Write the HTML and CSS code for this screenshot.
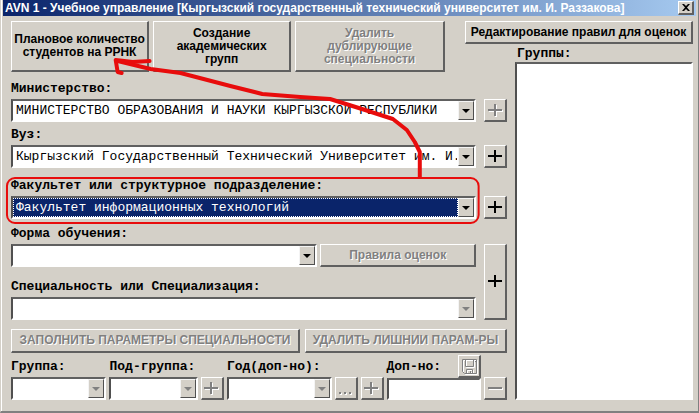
FILE: index.html
```html
<!DOCTYPE html>
<html lang="ru">
<head>
<meta charset="utf-8">
<title>AVN 1 - Учебное управление</title>
<link rel="stylesheet" href="styles.css">
</head>
<body>
<main class="window">
  <header class="titlebar">
    <h1>AVN 1 - Учебное управление [Кыргызский государственный технический университет им. И. Раззакова]</h1>
    <button class="btn close" type="button" aria-label="Закрыть"><svg width="8" height="7" viewBox="0 0 8 7"><path d="M0 0h2l2 2 2-2h2L5 3.500 8 7H6L4 5 2 7H0l3-3.500z"/></svg></button>
  </header>
  <div class="body">
    <div class="tools">
      <button class="btn t1" type="button">Плановое количество<br>студентов на РРНК</button>
      <button class="btn t2" type="button">Создание<br>академических<br>групп</button>
      <button class="btn t3" type="button" disabled>Удалить<br>дублирующие<br>специальности</button>
    </div>
    <button class="btn edit" type="button">Редактирование правил для оценок</button>
    <section class="groups">
      <label for="groups">Группы:</label>
      <select id="groups" size="10" class="sunken"></select>
    </section>
    <form class="form">
      <label for="min">Министерство:</label>
      <div class="combo sunken"><select id="min"><option>МИНИСТЕРСТВО ОБРАЗОВАНИЯ И НАУКИ КЫРГЫЗСКОЙ РЕСПУБЛИКИ</option></select><span class="arrow"></span></div>
      <button class="btn sq" type="button" disabled aria-label="Добавить министерство"><svg class="ico" viewBox="0 0 15 15"><path d="M0 7h14M7 1v12"/></svg></button>

      <label for="vuz">Вуз:</label>
      <div class="combo sunken"><select id="vuz"><option>Кыргызский Государственный Технический Университет им. И. Раззакова</option></select><span class="arrow"></span></div>
      <button class="btn sq" type="button" aria-label="Добавить вуз"><svg class="ico" viewBox="0 0 15 15"><path d="M0 7h14M7 1v12"/></svg></button>

      <label for="fac">Факультет или структурное подразделение:</label>
      <div class="combo sunken"><select id="fac" class="active"><option>Факультет информационных технологий</option></select><span class="arrow"></span></div>
      <button class="btn sq" type="button" aria-label="Добавить факультет"><svg class="ico" viewBox="0 0 15 15"><path d="M0 7h14M7 1v12"/></svg></button>

      <label for="study">Форма обучения:</label>
      <div class="pair">
        <div class="combo sunken"><select id="study"></select><span class="arrow"></span></div>
        <button class="btn rules" type="button" disabled>Правила оценок</button>
      </div>
      <button class="btn sq tall" type="button" aria-label="Добавить специальность"><svg class="ico" viewBox="0 0 15 15"><path d="M0 7h14M7 1v12"/></svg></button>

      <label for="spec">Специальность или Специализация:</label>
      <div class="combo sunken off"><select id="spec" disabled></select><span class="arrow"></span></div>

      <div class="params">
        <button class="btn fill" type="button" disabled>ЗАПОЛНИТЬ ПАРАМЕТРЫ СПЕЦИАЛЬНОСТИ</button>
        <button class="btn drop" type="button" disabled>УДАЛИТЬ ЛИШНИИ ПАРАМ-РЫ</button>
      </div>

      <div class="bottom">
        <div class="field">
          <label for="grp">Группа:</label>
          <div class="combo sunken off"><select id="grp" disabled></select><span class="arrow"></span></div>
        </div>
        <div class="field">
          <label for="sub">Под-группа:</label>
          <div class="combo sunken off"><select id="sub" disabled></select><span class="arrow"></span></div>
        </div>
        <button class="btn sq" type="button" disabled aria-label="Добавить группу"><svg class="ico" viewBox="0 0 15 15"><path d="M0 7h14M7 1v12"/></svg></button>
        <div class="field">
          <label for="year">Год(доп-но):</label>
          <div class="combo sunken off"><select id="year" disabled></select><span class="arrow"></span></div>
        </div>
        <button class="btn sq" type="button" disabled aria-label="Выбрать год"><svg class="ico" viewBox="0 0 15 15"><path d="M1 12h2M6 12h2M11 12h2"/></svg></button>
        <button class="btn sq" type="button" disabled aria-label="Добавить год"><svg class="ico" viewBox="0 0 15 15"><path d="M0 7h14M7 1v12"/></svg></button>
        <div class="field">
          <div class="head">
            <label for="extra">Доп-но:</label>
            <button class="btn sq" type="button" disabled aria-label="Сохранить"><svg class="ico disk" viewBox="0 0 15 15"><path d="M.5.5h14v14h-12l-2-2zM3.500.500v7h8v-7M4.500 14.500v-4h6v4M8.500 12v2M13 2.500h1"/></svg></button>
          </div>
          <input id="extra" class="sunken" type="text">
        </div>
        <button class="btn sq" type="button" disabled aria-label="Удалить"><svg class="ico" viewBox="0 0 15 15"><path d="M0 7h14"/></svg></button>
      </div>
    </form>
  </div>
  <svg class="marks" viewBox="0 0 699 413" preserveAspectRatio="none" aria-hidden="true">
    <rect x="6" y="178" width="473" height="45" rx="8" stroke-width="2"/>
    <path d="M420 177V152L415 142 407 130 393 119 362 109 330 99 300 97 262 94 230 86 207 80 180 73 150 69 117 61" stroke-width="4"/>
    <path d="M149 61L132 62 115 60 117 72 121 73" stroke-width="4"/>
  </svg>
</main>
</body>
</html>
```
FILE: styles.css
```css
* { box-sizing: border-box; }

body {
  margin: 0;
  background: #d4d0c8;
  color: #000;
  font: bold 12px/13px "Liberation Sans", sans-serif;
}

.window {
  position: relative;
  min-height: 100vh;
  padding: 0 2px 0 1px;
  border: solid #808080;
  border-width: 0 1px 2px;
  border-left-color: #d4d0c8;
  box-shadow: inset 1px 0 #fff;
}

.titlebar {
  display: flex;
  align-items: center;
  justify-content: space-between;
  height: 16px;
  margin-left: 1px;
  padding: 0 2px;
  background: linear-gradient(90deg, #0a246a, #a6caf0);
  color: #fff;
}

h1 {
  margin: 0;
  font: bold 12px/14px "Liberation Sans", sans-serif;
  white-space: nowrap;
}

.body {
  display: grid;
  grid-template: 25px 26px auto / 454fr 50fr 178fr;
  padding: 5px 3px 9px 9px;
}

.btn {
  display: flex;
  align-items: center;
  justify-content: center;
  min-width: 0;
  padding: 0;
  border: solid;
  border-width: 1px 2px 2px 1px;
  border-color: #fff #606060 #606060 #fff;
  background: #d4d0c8;
  color: #000;
  font: inherit;
  text-align: center;
  white-space: nowrap;
}

.btn:disabled { color: #808080; text-shadow: 1px 1px #fff; }

.close { flex: none; width: 16px; height: 14px; }

.sunken {
  border: 2px solid;
  border-color: #606060 #fff #fff #505050;
  background: #fff;
}

label {
  font: bold 13px/16px "Liberation Mono", monospace;
  white-space: nowrap;
}

.tools {
  grid-area: 1 / 1 / 3 / 2;
  display: flex;
  gap: 4px;
  padding-right: 20px;
}

.t1 { flex: 138 1 0; }
.t2 { flex: 138 1 0; }
.t3 { flex: 150 1 0; }

.edit { grid-area: 1 / 2 / 2 / 4; height: 23px; }

.groups {
  grid-area: 2 / 3 / 4 / 4;
  display: flex;
  flex-direction: column;
}

.groups label { margin-left: 2px; }
.groups select { flex: 1; min-height: 0; border-radius: 0; outline: 0; }

.form {
  grid-area: 3 / 1 / 4 / 3;
  display: grid;
  grid-template-columns: 1fr 23px;
  grid-template-rows: 27px 23px 23px 23px 28px 23px 25px 23px 30px 23px;
  column-gap: 8px;
  padding-right: 8px;
}

.form > label { grid-column: 1; align-self: end; padding-bottom: 2px; }
.form > .combo, .pair { grid-column: 1; }
.form > .sq { grid-column: 2; }

.combo { display: flex; min-width: 0; height: 23px; }

.combo select {
  flex: 1;
  min-width: 0;
  padding: 0 0 0 2px;
  border: 1px solid #fff;
  border-radius: 0;
  appearance: none;
  background: #fff;
  color: #000;
  opacity: 1;
  font: 13px/16px "Liberation Mono", monospace;
}

.combo .active {
  border: 1px dotted #fff;
  background: #0a246a;
  color: #fff;
}

.arrow {
  display: grid;
  place-items: center;
  flex: none;
  width: 16px;
  border: 1px solid;
  border-color: #f4f4f4 #505050 #505050 #f4f4f4;
  background: #d4d0c8;
}

.arrow::before {
  content: "";
  border: solid transparent;
  border-width: 4px 4px 0;
  border-top-color: #000;
}

.off .arrow::before { border-top-color: #808080; }

.sq { flex: none; width: 23px; height: 23px; }
.form > .tall { grid-row: 8 / 11; height: auto; }

.ico { width: 15px; height: 15px; fill: none; stroke: #000; stroke-width: 2; }
.btn:disabled .ico { stroke: #808080; filter: drop-shadow(1px 1px #fff); }
.btn:disabled .disk { stroke-width: 1; }

.pair { display: flex; gap: 3px; }
.pair .combo { flex: 307 1 0; }
.rules { flex: 155 1 0; }

.params {
  grid-column: 1 / 3;
  display: flex;
  gap: 5px;
  height: 24px;
  margin-top: 9px;
}

.fill { flex: 290 1 0; }
.drop { flex: 202 1 0; }

.bottom {
  grid-column: 1 / 3;
  display: grid;
  grid-template-columns: 95fr 88fr 23px 104fr 23px 23px 94fr 23px;
  column-gap: 3px;
  align-items: end;
  height: 47px;
}

.field { display: flex; flex-direction: column; gap: 2px; min-width: 0; }
.head { display: flex; align-items: center; justify-content: space-between; }
.field:has(.head) { gap: 0; }

.field input {
  width: 100%;
  height: 22px;
  padding: 0 2px;
  font: 13px/16px "Liberation Mono", monospace;
}

.marks {
  position: absolute;
  inset: 0;
  width: 100%;
  height: 413px;
  fill: none;
  stroke: #e80c0c;
  stroke-linejoin: round;
  stroke-linecap: round;
  pointer-events: none;
}
```
